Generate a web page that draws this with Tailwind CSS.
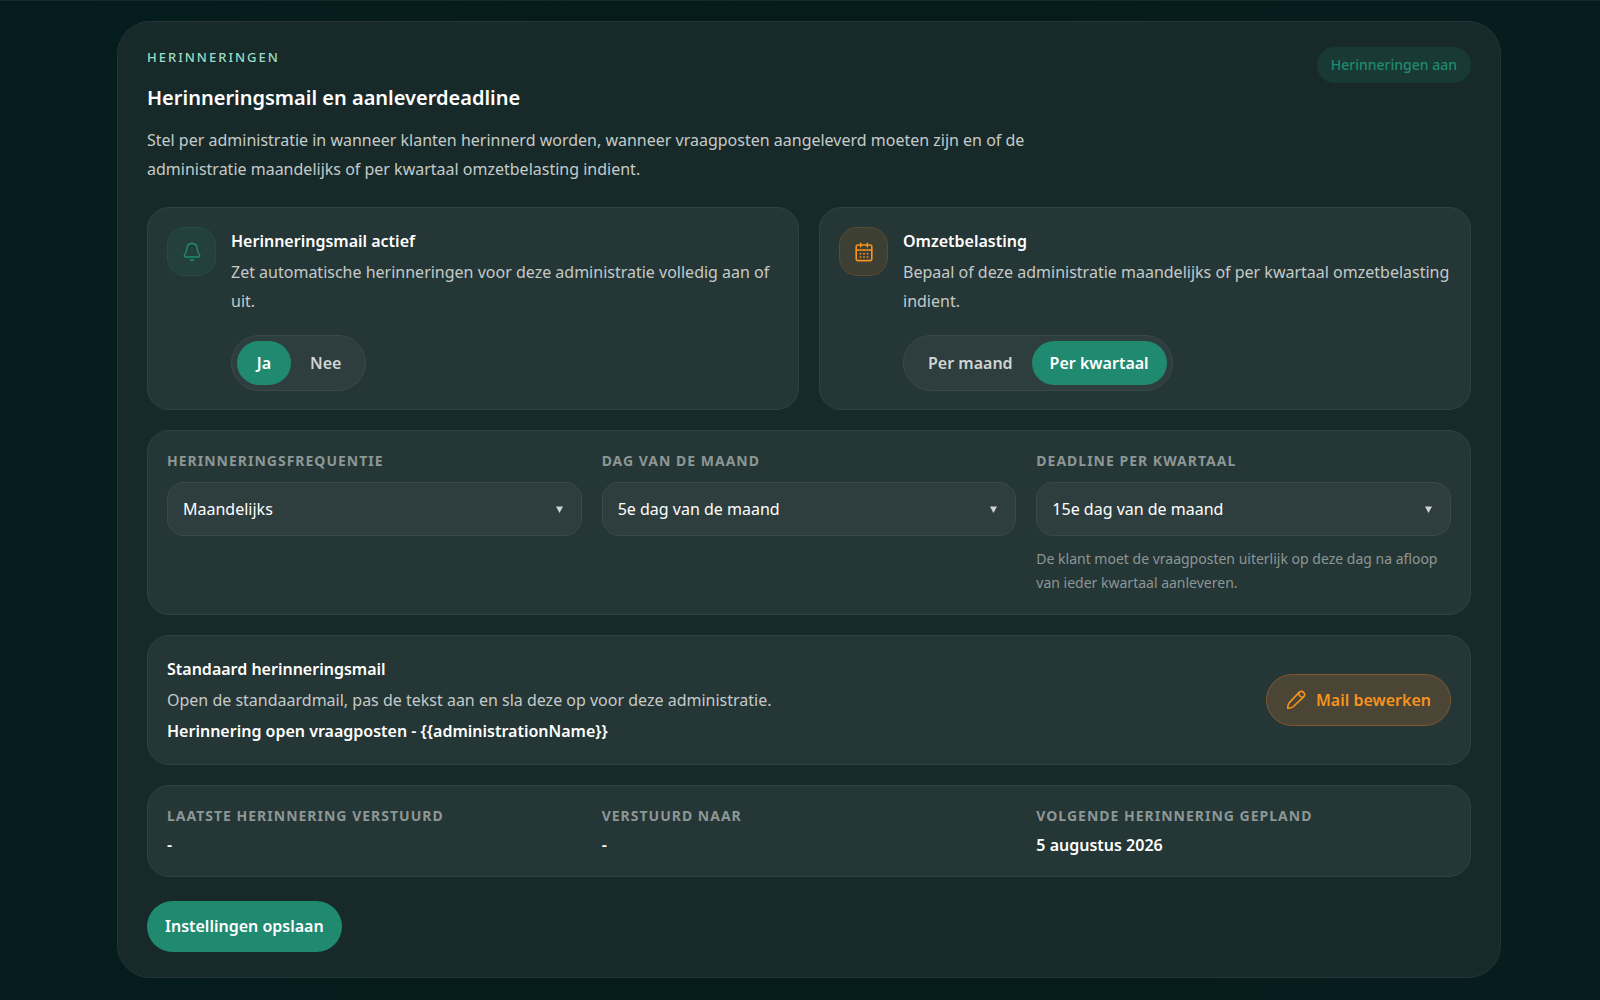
<!DOCTYPE html>
<html lang="nl">

<head>
    <title>Herinneringen</title>
    <meta charset="utf-8">
    <meta name="viewport" content="width=device-width, initial-scale=1.0">
    <script src="https://cdn.jsdelivr.net/npm/@tailwindcss/browser@4"></script>
</head>

<body class="min-h-screen bg-linear-to-r from-[#051c1e] via-[#061b1b] to-[#061c1e] border-t border-[#142a2a] font-['Noto_Sans','Open_Sans',sans-serif] text-[16px] text-white">
    <main class="pl-[117px] pr-[99px] pt-5 pb-[21px]">
        <section class="rounded-[33px] border border-[#233635] bg-[#172a29] px-[29px] py-[25px]">

            <!-- Header -->
            <header class="flex items-start justify-between">
                <div class="max-w-[900px]">
                    <p class="text-[13px] leading-[20px] font-medium tracking-[2px] text-[#9adcc6]">HERINNERINGEN</p>
                    <h1 class="mt-4 text-[20px] leading-[30px] font-semibold">Herinneringsmail en aanleverdeadline</h1>
                    <p class="mt-[13px] leading-[29px] text-[#c5cac9]">Stel per administratie in wanneer klanten herinnerd worden, wanneer vraagposten aangeleverd moeten zijn en of de administratie maandelijks of per kwartaal omzetbelasting indient.</p>
                </div>
                <span class="rounded-full bg-[#193934] px-[14px] py-2 text-[14px] leading-[20px] font-medium text-[#1f8a70]">Herinneringen aan</span>
            </header>

            <!-- Aan/uit en omzetbelasting -->
            <div class="mt-[23px] grid grid-cols-2 gap-5">
                <div class="flex items-start gap-[15px] rounded-[22px] border border-[#304241] bg-[#243635] p-[19px] pb-[18px]">
                    <span class="flex size-[49px] shrink-0 items-center justify-center rounded-[18px] border border-[#224c45] bg-[#23403d]">
                        <svg class="size-5 text-[#1f8a70]" viewBox="0 0 20 20" fill="none" stroke="currentColor" stroke-width="1.4" stroke-linecap="round" stroke-linejoin="round">
                            <path d="M10 1.500C6.900 1.500 5 3.800 4.800 6.800C4.600 10 3.800 11.200 2.600 12.800C1.800 13.900 2.300 15 3.700 15H16.300C17.700 15 18.200 13.900 17.400 12.800C16.200 11.200 15.400 10 15.200 6.800C15 3.800 13.100 1.500 10 1.500Z" />
                            <path d="M8.400 17.700C9.200 18.700 10.800 18.700 11.600 17.700" />
                        </svg>
                    </span>
                    <div>
                        <h2 class="leading-[28px] font-semibold">Herinneringsmail actief</h2>
                        <p class="mt-[3px] leading-[29px] text-[#c5cac9]">Zet automatische herinneringen voor deze administratie volledig aan of uit.</p>
                        <div class="mt-[19px] inline-flex rounded-full border border-[#3a4949] bg-[#2e3e3e] p-[5px] font-semibold" role="group" aria-label="Herinneringsmail actief">
                            <button type="button" aria-pressed="true" class="min-w-[54px] rounded-full bg-[#1f8a70] px-[19px] leading-[44px]">Ja</button>
                            <button type="button" aria-pressed="false" class="rounded-full px-[19px] leading-[44px] text-[#d0d4d4]">Nee</button>
                        </div>
                    </div>
                </div>

                <div class="flex items-start gap-[15px] rounded-[22px] border border-[#304241] bg-[#243635] p-[19px] pb-[18px]">
                    <span class="flex size-[49px] shrink-0 items-center justify-center rounded-[18px] border border-[#5a4a30] bg-[#3d3f33]">
                        <svg class="size-5 text-[#f7931e]" viewBox="0 0 20 20" fill="none" stroke="currentColor" stroke-width="1.6" stroke-linecap="round" stroke-linejoin="round">
                            <rect x="2.200" y="3" width="15.600" height="15.600" rx="1.600" />
                            <path d="M2.200 8H17.800M6.700 1.200V4.800M13.300 1.200V4.800" />
                            <path stroke-linecap="butt" stroke-dasharray="1.600 1.900" d="M5.700 11.700H14.300M5.700 15H14.300" />
                        </svg>
                    </span>
                    <div>
                        <h2 class="leading-[28px] font-semibold">Omzetbelasting</h2>
                        <p class="mt-[3px] leading-[29px] text-[#c5cac9]">Bepaal of deze administratie maandelijks of per kwartaal omzetbelasting indient.</p>
                        <div class="mt-[19px] inline-flex rounded-full border border-[#3a4949] bg-[#2e3e3e] p-[5px] font-semibold" role="group" aria-label="Omzetbelasting">
                            <button type="button" aria-pressed="false" class="rounded-full px-[19px] leading-[44px] text-[#d0d4d4]">Per maand</button>
                            <button type="button" aria-pressed="true" class="rounded-full bg-[#1f8a70] px-[18px] leading-[44px]">Per kwartaal</button>
                        </div>
                    </div>
                </div>
            </div>

            <!-- Planning -->
            <div class="mt-5 grid grid-cols-3 gap-5 rounded-[22px] border border-[#304241] bg-[#243635] p-[19px]">
                <div>
                    <label for="frequentie" class="block text-[14px] leading-[22px] font-bold tracking-[1px] text-[#8d9796]">HERINNERINGSFREQUENTIE</label>
                    <div class="relative mt-[10px]">
                        <select id="frequentie" class="h-[54px] w-full appearance-none rounded-[17px] border border-[#3a4949] bg-[#2e3e3e] px-[15px]">
                            <option>Maandelijks</option>
                        </select>
                        <svg class="pointer-events-none absolute top-6 right-[19px] size-[7px] text-[#d0d4d4]" viewBox="0 0 7 7" fill="currentColor"><path d="M0 0.500H7L3.500 7Z" /></svg>
                    </div>
                </div>
                <div>
                    <label for="dag" class="block text-[14px] leading-[22px] font-bold tracking-[1px] text-[#8d9796]">DAG VAN DE MAAND</label>
                    <div class="relative mt-[10px]">
                        <select id="dag" class="h-[54px] w-full appearance-none rounded-[17px] border border-[#3a4949] bg-[#2e3e3e] px-[15px]">
                            <option>5e dag van de maand</option>
                        </select>
                        <svg class="pointer-events-none absolute top-6 right-[19px] size-[7px] text-[#d0d4d4]" viewBox="0 0 7 7" fill="currentColor"><path d="M0 0.500H7L3.500 7Z" /></svg>
                    </div>
                </div>
                <div>
                    <label for="deadline" class="block text-[14px] leading-[22px] font-bold tracking-[1px] text-[#8d9796]">DEADLINE PER KWARTAAL</label>
                    <div class="relative mt-[10px]">
                        <select id="deadline" class="h-[54px] w-full appearance-none rounded-[17px] border border-[#3a4949] bg-[#2e3e3e] px-[15px]">
                            <option>15e dag van de maand</option>
                        </select>
                        <svg class="pointer-events-none absolute top-6 right-[19px] size-[7px] text-[#d0d4d4]" viewBox="0 0 7 7" fill="currentColor"><path d="M0 0.500H7L3.500 7Z" /></svg>
                    </div>
                    <p class="mt-[11px] text-[14px] leading-[24px] text-[#8d9796]">De klant moet de vraagposten uiterlijk op deze dag na afloop van ieder kwartaal aanleveren.</p>
                </div>
            </div>

            <!-- Standaardmail -->
            <div class="mt-5 flex items-center justify-between rounded-[22px] border border-[#304241] bg-[#243635] p-[19px]">
                <div>
                    <h2 class="leading-[28px] font-semibold">Standaard herinneringsmail</h2>
                    <p class="mt-[3px] leading-[29px] text-[#c5cac9]">Open de standaardmail, pas de tekst aan en sla deze op voor deze administratie.</p>
                    <p class="mt-[3px] leading-[27px] font-semibold">Herinnering open vraagposten - {{administrationName}}</p>
                </div>
                <button type="button" class="flex items-center gap-[10px] rounded-full border border-[#80572f] bg-[#4a4535] px-[19px] leading-[50px] font-semibold text-[#f7931e]">
                    <svg class="size-5" viewBox="0 0 20 20" fill="none" stroke="currentColor" stroke-width="1.6" stroke-linecap="round" stroke-linejoin="round">
                        <path d="M12.800 2.600C14.200 1.200 16.300 1.100 17.600 2.400C18.900 3.700 18.800 5.800 17.400 7.200L7.400 16.500C6.200 17.600 4.200 18.300 1.700 18.300C1.700 16.200 2.100 14.200 3.200 12.900Z" />
                        <path d="M12.800 2.600C12.400 5.200 14.700 7.500 17.400 7.200" />
                    </svg>
                    Mail bewerken
                </button>
            </div>

            <!-- Status -->
            <dl class="mt-5 grid grid-cols-3 gap-5 rounded-[22px] border border-[#304241] bg-[#243635] p-[19px]">
                <div>
                    <dt class="text-[14px] leading-[22px] font-bold tracking-[1px] text-[#8d9796]">LAATSTE HERINNERING VERSTUURD</dt>
                    <dd class="mt-[6px] leading-[24px] font-semibold">-</dd>
                </div>
                <div>
                    <dt class="text-[14px] leading-[22px] font-bold tracking-[1px] text-[#8d9796]">VERSTUURD NAAR</dt>
                    <dd class="mt-[6px] leading-[24px] font-semibold">-</dd>
                </div>
                <div>
                    <dt class="text-[14px] leading-[22px] font-bold tracking-[1px] text-[#8d9796]">VOLGENDE HERINNERING GEPLAND</dt>
                    <dd class="mt-[6px] leading-[24px] font-semibold">5 augustus 2026</dd>
                </div>
            </dl>

            <button type="button" class="mt-6 block rounded-full bg-[#1f8a70] px-[18px] leading-[51px] font-semibold">Instellingen opslaan</button>
        </section>
    </main>
</body>

</html>
